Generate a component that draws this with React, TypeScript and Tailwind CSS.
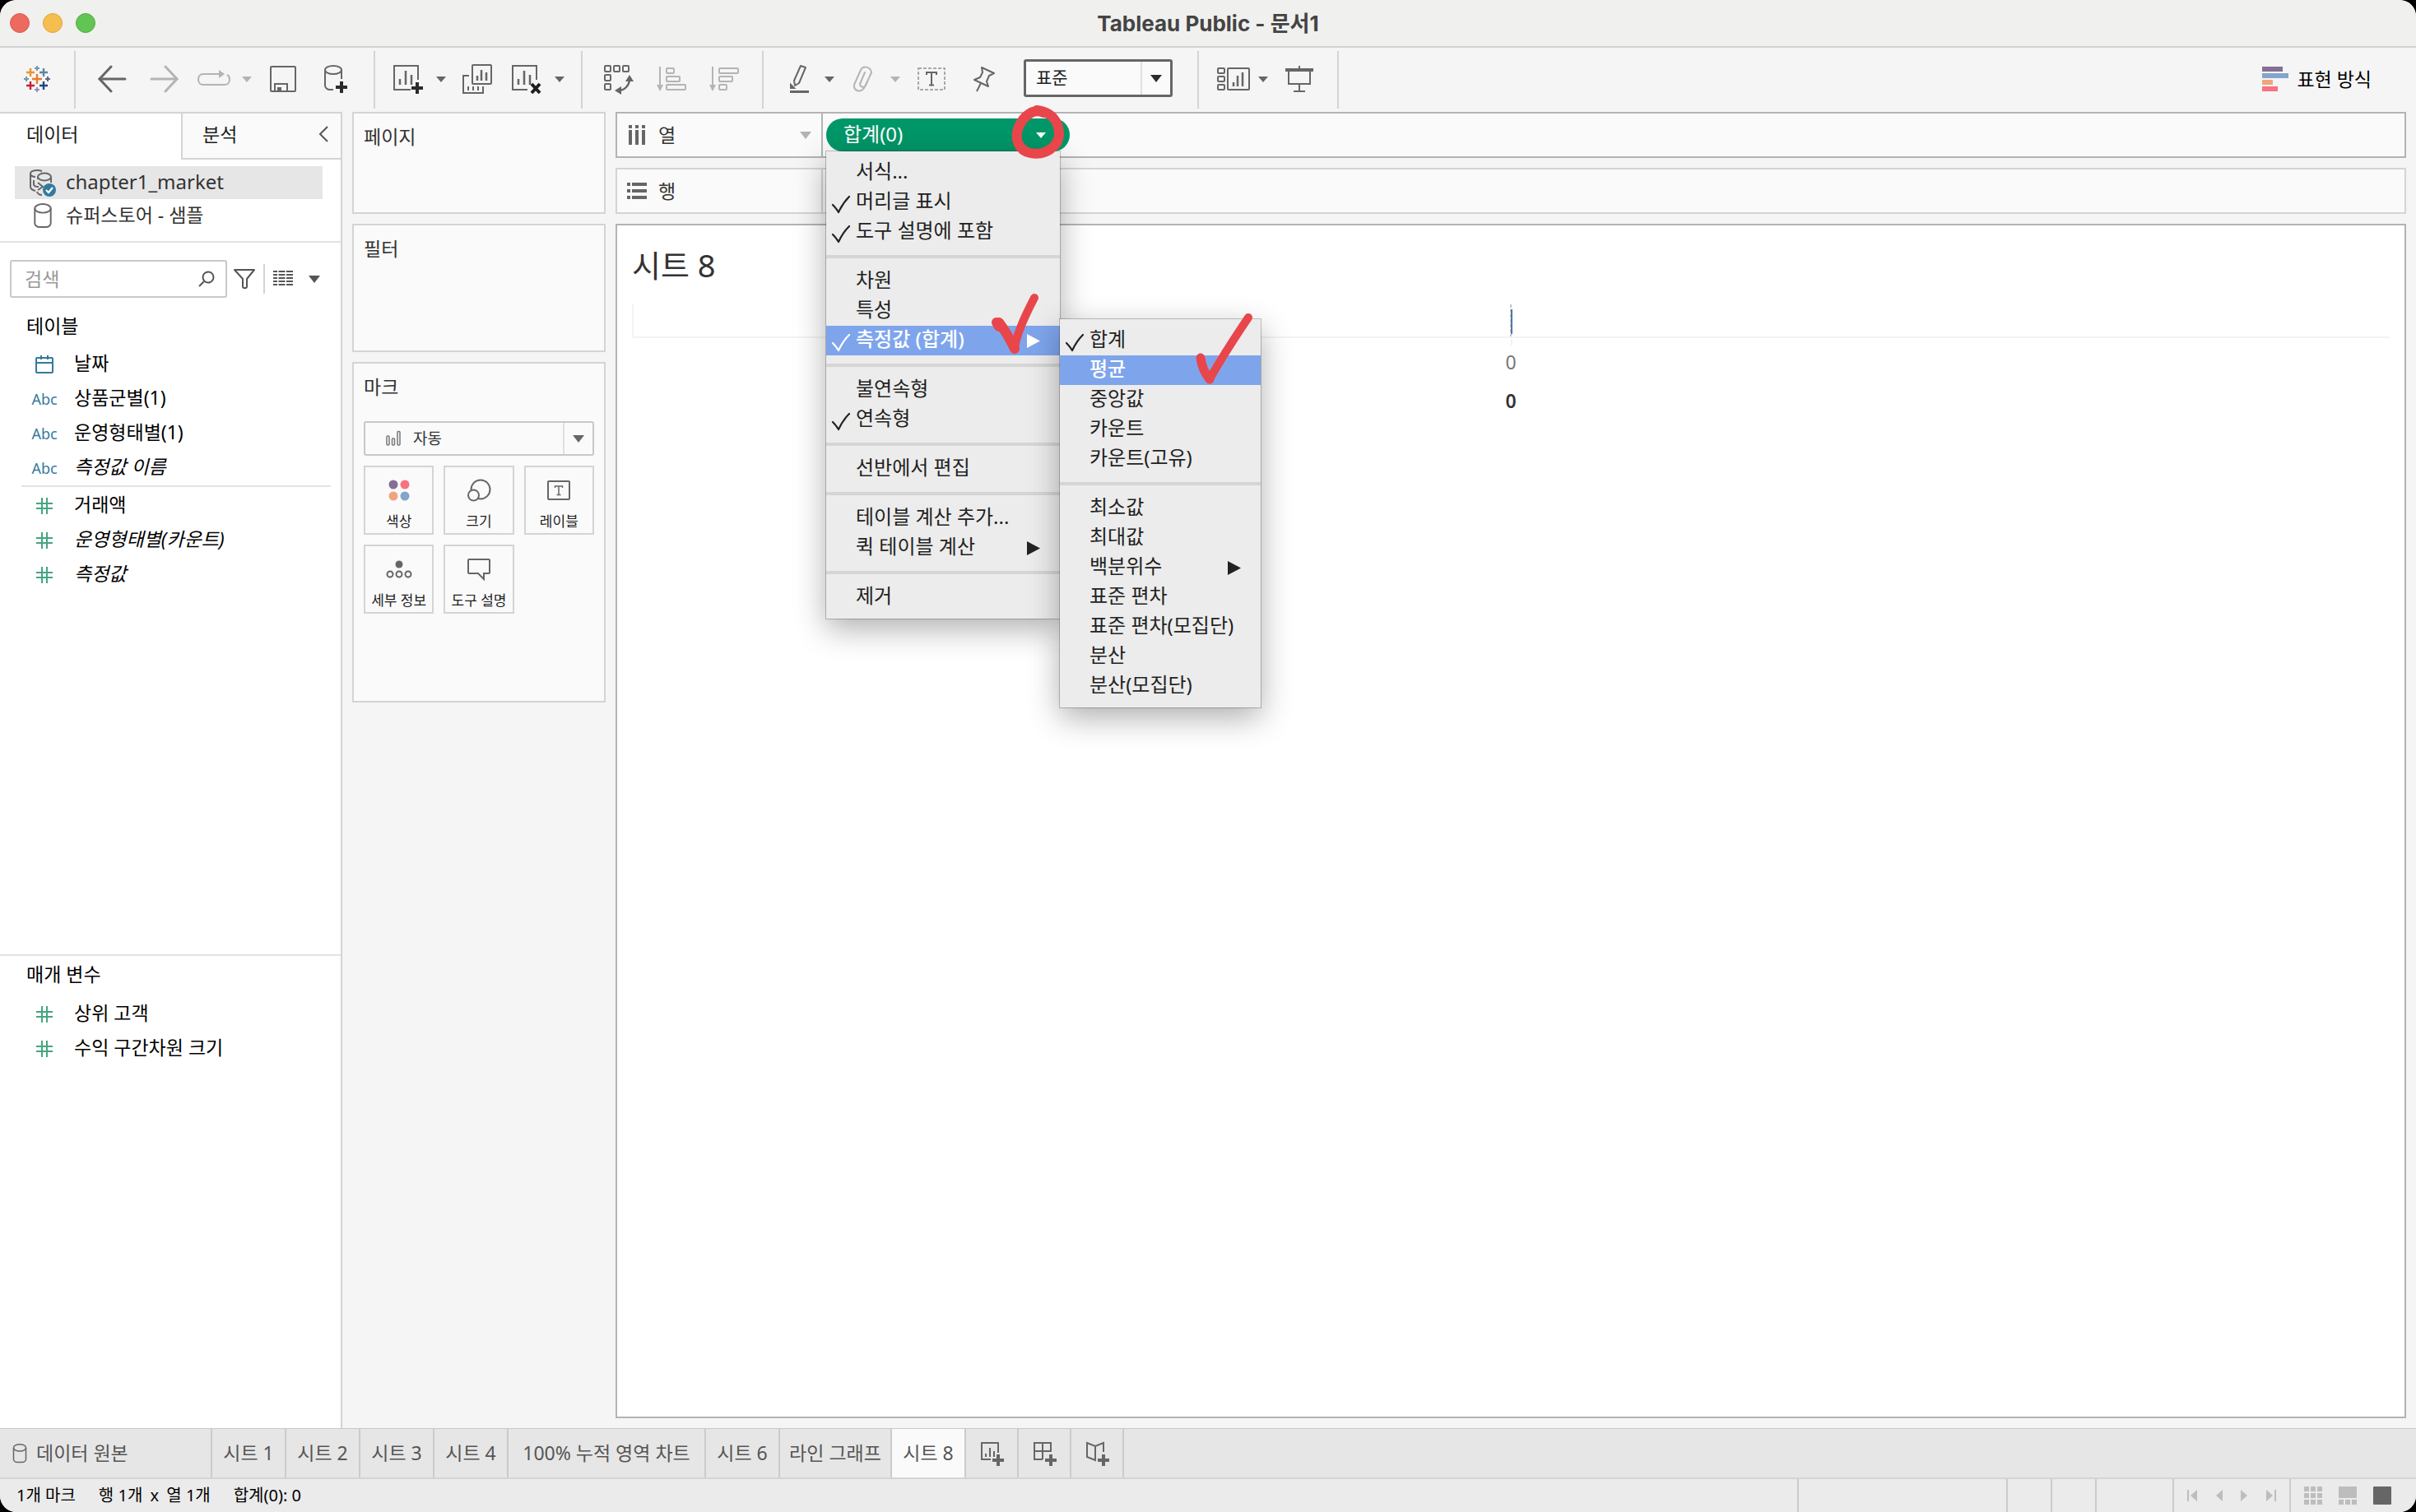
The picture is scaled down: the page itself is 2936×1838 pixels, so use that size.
import type { ReactNode } from "react";
import clsx from "clsx";

const RED = "#e8464b";

/* ---------- small shared pieces ---------- */

function Caret({ className, big }: { className?: string; big?: boolean }) {
  return (
    <svg width={big ? 14 : 12} height={big ? 9 : 7} viewBox="0 0 14 9" preserveAspectRatio="none" className={clsx("shrink-0", className)}>
      <path d="M0 0H14L7 9Z" fill="currentColor" />
    </svg>
  );
}

function Cylinder({ w, h }: { w: number; h: number }) {
  return (
    <svg width={w} height={h} viewBox="0 0 24 32" fill="none" stroke="#666" strokeWidth={2}>
      <ellipse cx="12" cy="6.5" rx="10" ry="5.5" />
      <path d="M2 6.5V25c0 3 3 5 6 5h8c3 0 6-2 6-5V6.5" />
    </svg>
  );
}

function HashIcon() {
  return (
    <svg width="22" height="22" viewBox="0 0 22 22" fill="none" stroke="#45a580" strokeWidth={2}>
      <path d="M8 1v20M14 1v20M1 8h20M1 14h20" />
    </svg>
  );
}

function CalendarIcon() {
  return (
    <svg width="24" height="24" viewBox="0 0 24 24" fill="none" stroke="#337a9e" strokeWidth={2}>
      <rect x="2" y="4" width="20" height="18" rx="1" />
      <path d="M2 10h20M8 1v5M16 1v5" />
    </svg>
  );
}

/* ---------- toolbar ---------- */

function Group({ children, className }: { children: ReactNode; className?: string }) {
  return <div className={clsx("flex items-center border-r-2 border-[#d4d4d4] pb-1", className)}>{children}</div>;
}

function Tool({ label, className, children }: { label: string; className?: string; children: ReactNode }) {
  return (
    <button type="button" aria-label={label} className={clsx("flex h-16 shrink-0 items-center justify-center pt-0.5 text-[#666]", className ?? "w-16")}>
      {children}
    </button>
  );
}

function TableauLogo() {
  return (
    <svg width="34" height="34" viewBox="0 0 34 34" fill="none">
      <path d="M17 11v12M11 17h12" stroke="#eb7a2d" strokeWidth={2.4} />
      <path d="M9 4v10M4 9h10" stroke="#e8942d" strokeWidth={2.4} />
      <path d="M25 4v10M20 9h10" stroke="#5b879b" strokeWidth={2.4} />
      <path d="M9 20v10M4 25h10" stroke="#c72037" strokeWidth={2.4} />
      <path d="M25 20v10M20 25h10" stroke="#1f457e" strokeWidth={2.4} />
      <path d="M17 1v6M14 4h6" stroke="#7199a6" strokeWidth={2} />
      <path d="M17 27v6M14 30h6" stroke="#8b93ba" strokeWidth={2} />
      <path d="M4 14v6M1 17h6" stroke="#7199a6" strokeWidth={2} />
      <path d="M30 14v6M27 17h6" stroke="#5c6692" strokeWidth={2} />
    </svg>
  );
}

function Toolbar() {
  return (
    <div className="flex h-[78px] shrink-0 bg-[#f5f5f5] py-1">
      <Group className="w-[92px] justify-center">
        <Tool label="Tableau">
          <TableauLogo />
        </Tool>
      </Group>

      <Group className="pr-3.5 pl-3">
        <Tool label="뒤로">
          <svg width="36" height="34" viewBox="0 0 36 34" fill="none" stroke="#666" strokeWidth={3} strokeLinecap="round">
            <path d="M3 17H34" />
            <path d="M17 2L3 17L17 32" />
          </svg>
        </Tool>
        <Tool label="앞으로">
          <svg width="36" height="34" viewBox="0 0 36 34" fill="none" stroke="#b4b4b4" strokeWidth={3} strokeLinecap="round">
            <path d="M2 17H33" />
            <path d="M19 2L33 17L19 32" />
          </svg>
        </Tool>
        <Tool label="재생" className="w-14">
          <svg width="42" height="26" viewBox="0 0 42 26" fill="none" stroke="#b4b4b4" strokeWidth={2}>
            <path d="M28 7H8C4 7 2 10 2 13.500S4 20 8 20H34C38 20 40 17 40 13.500C40 11 39 9 37 8" />
            <path d="M27 2L34 7L27 12Z" fill="#b4b4b4" stroke="none" />
          </svg>
        </Tool>
        <Tool label="재생 메뉴" className="w-6">
          <Caret className="text-[#b4b4b4]" />
        </Tool>
        <Tool label="저장">
          <svg width="34" height="34" viewBox="0 0 34 34" fill="none" stroke="#666" strokeWidth={2}>
            <rect x="2" y="2" width="30" height="30" rx="1" />
            <path d="M7 32V23H22V32" />
            <path d="M10 27h5v5h-5z" fill="#666" stroke="none" />
          </svg>
        </Tool>
        <Tool label="새 데이터 원본">
          <svg width="30" height="36" viewBox="0 0 30 36" fill="none" stroke="#666" strokeWidth={2}>
            <ellipse cx="12" cy="7" rx="10" ry="5" />
            <path d="M2 7V26C2 29 5 31 8 31H12M22 7V18" />
            <path d="M22 21V35M15 28H29" stroke="#2b2b2b" strokeWidth={4} />
          </svg>
        </Tool>
      </Group>

      <Group className="pr-2.5 pl-2">
        <Tool label="새 워크시트">
          <svg width="38" height="38" viewBox="0 0 38 38" fill="none" stroke="#666" strokeWidth={2}>
            <path d="M31 20V3H2V32H22" />
            <path d="M9 19v7M16 9v17M23 14v12" strokeWidth={2.500} />
            <path d="M30 23V37M23 30H37" stroke="#2b2b2b" strokeWidth={4} />
          </svg>
        </Tool>
        <Tool label="새 워크시트 메뉴" className="w-4">
          <Caret />
        </Tool>
        <Tool label="시트 복제" className="w-[72px]">
          <svg width="38" height="36" viewBox="0 0 38 36" fill="none" stroke="#666" strokeWidth={2}>
            <rect x="13" y="1" width="23" height="23" rx="1" />
            <path d="M19 14v6M24 7v13M30 10v10" strokeWidth={2.500} />
            <path d="M9 14H2V35H26V27" />
            <path d="M8 27v5M14 27v5M20 27v5" />
          </svg>
        </Tool>
        <Tool label="시트 지우기" className="w-12">
          <svg width="38" height="38" viewBox="0 0 38 38" fill="none" stroke="#666" strokeWidth={2}>
            <path d="M31 20V3H2V32H20" />
            <path d="M9 19v7M16 9v17M23 14v12" strokeWidth={2.500} />
            <path d="M25 25L35 36M35 25L25 36" stroke="#1e1e1e" strokeWidth={4} />
          </svg>
        </Tool>
        <Tool label="지우기 메뉴" className="w-8">
          <Caret />
        </Tool>
      </Group>

      <Group className="pr-3.5 pl-3">
        <Tool label="행과 열 바꾸기">
          <svg width="38" height="38" viewBox="0 0 38 38" fill="none" stroke="#666" strokeWidth={2}>
            <rect x="2" y="3" width="7" height="7" rx="1" />
            <rect x="13" y="3" width="7" height="7" rx="1" />
            <rect x="24" y="3" width="7" height="7" rx="1" />
            <rect x="2" y="14" width="7" height="7" rx="1" />
            <rect x="2" y="25" width="7" height="7" rx="1" />
            <path d="M32 19C32 26 27 32 20 33" strokeWidth={2.500} />
            <path d="M27 22L32 14L37 22ZM22 28L14 33L22 38Z" fill="#666" stroke="none" />
          </svg>
        </Tool>
        <Tool label="오름차순 정렬">
          <svg width="38" height="32" viewBox="0 0 38 32" fill="none" stroke="#b4b4b4" strokeWidth={2}>
            <path d="M5 1V26" />
            <path d="M1 23H9L5 31Z" fill="#b4b4b4" stroke="none" />
            <rect x="13" y="3" width="9" height="6" rx="1" />
            <rect x="13" y="13" width="16" height="6" rx="1" />
            <rect x="13" y="23" width="23" height="6" rx="1" />
          </svg>
        </Tool>
        <Tool label="내림차순 정렬">
          <svg width="38" height="32" viewBox="0 0 38 32" fill="none" stroke="#b4b4b4" strokeWidth={2}>
            <path d="M5 1V26" />
            <path d="M1 23H9L5 31Z" fill="#b4b4b4" stroke="none" />
            <rect x="13" y="3" width="23" height="6" rx="1" />
            <rect x="13" y="13" width="16" height="6" rx="1" />
            <rect x="13" y="23" width="9" height="6" rx="1" />
          </svg>
        </Tool>
      </Group>

      <Group className="pr-[30px] pl-4">
        <Tool label="하이라이트" className="w-14">
          <svg width="26" height="36" viewBox="0 0 26 36" fill="none" stroke="#666" strokeWidth={2}>
            <path d="M14 2L20 4L12 23L7 26L6 20Z" strokeLinejoin="round" />
            <path d="M2 25L6 29L2 29Z" fill="#666" />
            <path d="M1 33.500H24" strokeWidth={3} />
          </svg>
        </Tool>
        <Tool label="하이라이트 메뉴" className="w-4">
          <Caret />
        </Tool>
        <Tool label="그룹">
          <svg width="26" height="34" viewBox="0 0 26 34" fill="none" stroke="#b4b4b4" strokeWidth={2} strokeLinecap="round">
            <path d="M20 18L15 28C11 34 2 32 3 24L11 6C14 0 23 2 24 9L17 25C15 28 10 27 10 23L16 9" />
          </svg>
        </Tool>
        <Tool label="그룹 메뉴" className="w-4">
          <Caret className="text-[#b4b4b4]" />
        </Tool>
        <Tool label="마크 레이블" className="w-[72px]">
          <svg width="36" height="30" viewBox="0 0 36 30" fill="none" stroke="#aaa" strokeWidth={2}>
            <rect x="2" y="2" width="32" height="26" strokeDasharray="4 2" />
            <path d="M12 10V7H24V10M18 7V22M15 22.500H21" stroke="#666" />
          </svg>
        </Tool>
        <Tool label="축 고정" className="w-14">
          <svg width="30" height="32" viewBox="0 0 30 32" fill="none" stroke="#666" strokeWidth={2} strokeLinejoin="round">
            <path d="M12 2L27 9L21 12L18 19L20 25L3 17L10 14L13 8Z" />
            <path d="M11 21L6 31" />
          </svg>
        </Tool>
        <div className="ml-5 flex h-[46px] w-[181px] items-center rounded-[3px] border-[3px] border-[#666] bg-[#fafafa]">
          <select aria-label="맞춤" className="h-full min-w-0 flex-1 appearance-none pl-3 text-[21px] text-[#1e1e1e] outline-none" defaultValue="표준">
            <option>표준</option>
          </select>
          <span className="flex h-full w-9 items-center justify-center border-l-2 border-[#e0e0e0] text-[#2b2b2b]">
            <Caret big />
          </span>
        </div>
      </Group>

      <Group className="pr-2.5 pl-3.5">
        <Tool label="카드 표시/숨기기" className="w-14">
          <svg width="42" height="32" viewBox="0 0 42 32" fill="none" stroke="#666" strokeWidth={2}>
            <rect x="2" y="3" width="8" height="6" rx="1" />
            <rect x="2" y="13" width="8" height="6" rx="1" />
            <rect x="2" y="23" width="8" height="6" rx="1" />
            <rect x="14" y="3" width="26" height="26" rx="1" />
            <path d="M21 20v5M26 12v13M32 8v17" strokeWidth={2.500} />
          </svg>
        </Tool>
        <Tool label="카드 메뉴" className="w-4">
          <Caret />
        </Tool>
        <Tool label="프레젠테이션 모드" className="w-[72px]">
          <svg width="36" height="34" viewBox="0 0 36 34" fill="none" stroke="#666" strokeWidth={2}>
            <path d="M1 6H35" strokeWidth={4} />
            <path d="M18 1V5M5 8V23H31V8M18 23V32M11 32H25" />
          </svg>
        </Tool>
      </Group>

      <button type="button" className="ml-auto flex items-center gap-2.5 pr-[54px] pb-0.5 text-[23px] text-black">
        <svg width="32" height="30" viewBox="0 0 32 30">
          <path d="M0 0H25V6H0Z" fill="#866e95" />
          <path d="M0 8H32V14H0Z" fill="#82a5cb" />
          <path d="M0 16H13V22H0Z" fill="#f2a57d" />
          <path d="M0 24H19V30H0Z" fill="#fa7180" />
        </svg>
        표현 방식
      </button>
    </div>
  );
}

/* ---------- data pane ---------- */

interface Field {
  name: string;
  icon: "date" | "abc" | "num";
  italic?: boolean;
}

const dimensions: Field[] = [
  { name: "날짜", icon: "date" },
  { name: "상품군별(1)", icon: "abc" },
  { name: "운영형태별(1)", icon: "abc" },
  { name: "측정값 이름", icon: "abc", italic: true },
];

const measures: Field[] = [
  { name: "거래액", icon: "num" },
  { name: "운영형태별(카운트)", icon: "num", italic: true },
  { name: "측정값", icon: "num", italic: true },
];

const parameters: Field[] = [
  { name: "상위 고객", icon: "num" },
  { name: "수익 구간차원 크기", icon: "num" },
];

function FieldList({ fields }: { fields: Field[] }) {
  return (
    <ul>
      {fields.map((f) => (
        <li key={f.name} className="flex h-[42px] items-center pl-8">
          <span className="flex w-11 justify-center pt-1">
            {f.icon === "date" && <CalendarIcon />}
            {f.icon === "abc" && <span className="text-[18px] text-[#337a9e]">Abc</span>}
            {f.icon === "num" && <HashIcon />}
          </span>
          <span className={clsx("pl-3.5 text-[23px] text-black", f.italic && "italic")}>{f.name}</span>
        </li>
      ))}
    </ul>
  );
}

function DataPane() {
  return (
    <aside className="flex w-[416px] shrink-0 flex-col border-t-2 border-r-2 border-[#d4d4d4] bg-white">
      <div className="flex h-14 shrink-0 text-[23px] text-[#1e1e1e]">
        <button type="button" className="w-[220px] pb-1.5 pl-8 text-left">
          데이터
        </button>
        <div className="flex flex-1 items-center justify-between border-b-2 border-l-2 border-[#d4d4d4] bg-[#fafafa] pr-3.5 pb-1 pl-6">
          <button type="button">분석</button>
          <button type="button" aria-label="접기">
            <svg width="14" height="20" viewBox="0 0 14 20" fill="none" stroke="#555" strokeWidth={2}>
              <path d="M12 1L3 10L12 19" />
            </svg>
          </button>
        </div>
      </div>

      <ul className="mt-2 border-b-2 border-[#e3e3e3] pb-[11px] text-[#333]">
        <li className="mr-[22px] ml-[18px] flex h-10 items-center bg-[#e6e6e6] pl-4">
          <svg width="34" height="34" viewBox="0 0 34 34" fill="none" stroke="#666" strokeWidth={2}>
            <path d="M17 3C12 1 3 2 3 6V22C3 25 5 26 9 27" />
            <path d="M3 7C4 9 6 10 9 10" />
            <ellipse cx="20" cy="10" rx="8" ry="4.500" />
            <path d="M12 10V13M28 10V17M7 14V19C7 21 9 22 13 22" />
            <path d="M12 17L18 22L12 26M11 28C12 31 14 32 17 32" />
            <circle cx="26" cy="26" r="8" fill="#337a9e" stroke="none" />
            <path d="M22 26L25 29L30 23" stroke="#fff" strokeWidth={2.200} />
          </svg>
          <span className="pb-0.5 pl-3 text-[24px]">chapter1_market</span>
        </li>
        <li className="ml-[18px] flex h-10 items-center pl-[22px]">
          <Cylinder w={24} h={31} />
          <span className="pb-0.5 pl-4 text-[23px]">슈퍼스토어 - 샘플</span>
        </li>
      </ul>

      <div className="mt-[21px] flex items-center pl-3">
        <label className="flex h-[46px] w-[264px] items-center rounded-[3px] border-2 border-[#c8c8c8] bg-white pr-3">
          <input type="text" aria-label="검색" placeholder="검색" className="min-w-0 flex-1 pl-4 text-[23px] outline-none placeholder:text-[#999]" />
          <svg width="22" height="22" viewBox="0 0 22 22" fill="none" stroke="#555" strokeWidth={2}>
            <circle cx="13" cy="9" r="6.500" />
            <path d="M8 14L2 20" />
          </svg>
        </label>
        <button type="button" aria-label="필터" className="pl-2">
          <svg width="26" height="26" viewBox="0 0 26 26" fill="none" stroke="#555" strokeWidth={2} strokeLinejoin="round">
            <path d="M1 2H25L16 13V22C16 25 11 25 11 22V13Z" />
          </svg>
        </button>
        <span className="ml-2.5 h-9 w-0.5 bg-[#d4d4d4]" />
        <button type="button" aria-label="보기" className="pl-2.5">
          <svg width="24" height="20" viewBox="0 0 24 20" stroke="#555" strokeWidth={2}>
            <path d="M0 1H24M0 5H24M0 9H24M0 13H24M0 17H24" strokeDasharray="5 1.500 8 1.500 8" />
          </svg>
        </button>
        <button type="button" aria-label="보기 메뉴" className="pl-[19px] text-[#555]">
          <Caret big />
        </button>
      </div>

      <h2 className="mt-2.5 flex h-12 items-center pl-8 text-[23px] text-black">테이블</h2>
      <FieldList fields={dimensions} />
      <hr className="mt-0.5 mr-3 ml-[26px] border-t-2 border-[#e3e3e3]" />
      <FieldList fields={measures} />

      <section className="mt-auto h-[576px] border-t-2 border-[#e3e3e3]">
        <h2 className="mb-1 flex h-11 items-center pl-8 text-[23px] text-black">매개 변수</h2>
        <FieldList fields={parameters} />
      </section>
    </aside>
  );
}

/* ---------- cards ---------- */

function Card({ title, className, children }: { title: string; className: string; children?: ReactNode }) {
  return (
    <section className={clsx("border-2 border-[#d4d4d4] bg-[#fafafa] px-3 pt-2.5", className)}>
      <h2 className="text-[23px] leading-9 text-[#333]">{title}</h2>
      {children}
    </section>
  );
}

function MarkButton({ label, children }: { label: string; children: ReactNode }) {
  return (
    <button type="button" className="flex h-[84px] flex-col items-center border-2 border-[#d4d4d4] pt-3 text-[17px] leading-6 whitespace-nowrap text-[#1e1e1e]">
      <span className="flex h-8 items-center">{children}</span>
      <span className="mt-2.5">{label}</span>
    </button>
  );
}

function MarksCard() {
  return (
    <Card title="마크" className="h-[414px]">
      <div className="mt-6 flex h-[42px] items-center rounded-[3px] border-2 border-[#c8c8c8]">
        <svg width="20" height="20" viewBox="0 0 20 20" fill="none" stroke="#777" strokeWidth={1.500} className="ml-6">
          <rect x="2" y="7" width="3" height="11" rx="1" />
          <rect x="8.500" y="10" width="3" height="8" rx="1" />
          <rect x="15" y="1.500" width="3" height="16.500" rx="1" />
        </svg>
        <select aria-label="마크 유형" className="h-full min-w-0 flex-1 appearance-none pl-3.5 text-[19px] text-[#333] outline-none" defaultValue="자동">
          <option>자동</option>
        </select>
        <span className="flex h-full w-9 items-center justify-center border-l-2 border-[#e0e0e0] text-[#666]">
          <Caret big />
        </span>
      </div>
      <div className="mt-3 grid grid-cols-3 gap-3">
        <MarkButton label="색상">
          <svg width="26" height="26" viewBox="0 0 26 26">
            <circle cx="6" cy="6" r="5.500" fill="#866e95" />
            <circle cx="20" cy="6" r="5.500" fill="#fa7180" />
            <circle cx="6" cy="20" r="5.500" fill="#f2a57d" />
            <circle cx="20" cy="20" r="5.500" fill="#82a5cb" />
          </svg>
        </MarkButton>
        <MarkButton label="크기">
          <svg width="30" height="28" viewBox="0 0 30 28" fill="none" stroke="#666" strokeWidth={2}>
            <circle cx="17" cy="13" r="11.500" />
            <circle cx="8.500" cy="20" r="6.500" fill="#fafafa" />
          </svg>
        </MarkButton>
        <MarkButton label="레이블">
          <svg width="28" height="24" viewBox="0 0 28 24" fill="none" stroke="#666" strokeWidth={2}>
            <rect x="1" y="1" width="26" height="22" rx="1" />
            <path d="M9.500 9V7H18.500V9M14 7V17M11.500 17.500H16.500" strokeWidth={1.500} />
          </svg>
        </MarkButton>
        <MarkButton label="세부 정보">
          <svg width="32" height="24" viewBox="0 0 32 24" fill="none" stroke="#666" strokeWidth={2}>
            <circle cx="16" cy="6" r="4.500" fill="#666" stroke="none" />
            <circle cx="5" cy="18" r="3.500" />
            <circle cx="16" cy="18" r="3.500" />
            <circle cx="27" cy="18" r="3.500" />
          </svg>
        </MarkButton>
        <MarkButton label="도구 설명">
          <svg width="28" height="28" viewBox="0 0 28 28" fill="none" stroke="#666" strokeWidth={2}>
            <path d="M2 2H26Q27 2 27 3V18Q27 19 26 19H20V26L13 19H2Q1 19 1 18V3Q1 2 2 2Z" />
          </svg>
        </MarkButton>
      </div>
    </Card>
  );
}

/* ---------- menus ---------- */

interface Item {
  label?: string;
  checked?: boolean;
  active?: boolean;
  arrow?: boolean;
  submenu?: Item[];
}

const aggregations: Item[] = [
  { label: "합계", checked: true },
  { label: "평균", active: true },
  { label: "중앙값" },
  { label: "카운트" },
  { label: "카운트(고유)" },
  {},
  { label: "최소값" },
  { label: "최대값" },
  { label: "백분위수", arrow: true },
  { label: "표준 편차" },
  { label: "표준 편차(모집단)" },
  { label: "분산" },
  { label: "분산(모집단)" },
];

const pillMenu: Item[] = [
  { label: "서식..." },
  { label: "머리글 표시", checked: true },
  { label: "도구 설명에 포함", checked: true },
  {},
  { label: "차원" },
  { label: "특성" },
  { label: "측정값 (합계)", checked: true, active: true, arrow: true, submenu: aggregations },
  {},
  { label: "불연속형" },
  { label: "연속형", checked: true },
  {},
  { label: "선반에서 편집" },
  {},
  { label: "테이블 계산 추가..." },
  { label: "퀵 테이블 계산", arrow: true },
  {},
  { label: "제거" },
];

function Menu({ items, className }: { items: Item[]; className: string }) {
  return (
    <ul className={clsx("absolute bg-[#ececec] py-2 text-[24px] text-[#222] shadow-[0_0_0_1px_rgba(0,0,0,0.22),0_12px_36px_rgba(0,0,0,0.32)]", className)}>
      {items.map((it, i) =>
        it.label ? (
          <li key={i} className={clsx("relative h-9", it.active && "bg-[#7ea5ec] text-white")}>
            <button type="button" className="flex h-9 w-full items-center pr-6 pb-1 whitespace-nowrap">
              <span className="flex w-9 shrink-0 pt-2 pl-1.5">
                {it.checked && (
                  <svg width="24" height="23" viewBox="0 0 24 23" fill="none" stroke="currentColor" strokeWidth={2.200} strokeLinecap="round" strokeLinejoin="round">
                    <path d="M2 12Q6 16 9 21Q14 10 22 2" />
                  </svg>
                )}
              </span>
              <span className={clsx("leading-8", it.active && "font-medium")}>{it.label}</span>
              {it.arrow && (
                <svg width="16" height="17" viewBox="0 0 16 17" className="mt-1 ml-auto shrink-0">
                  <path d="M0 0L16 8.500L0 17Z" fill="currentColor" />
                </svg>
              )}
            </button>
            {it.submenu && <Menu items={it.submenu} className="-top-2 left-full w-[244px]" />}
            {it.submenu && (
              <svg width="62" height="76" viewBox="0 0 62 76" fill="none" stroke={RED} strokeLinecap="round" strokeLinejoin="round" className="absolute -top-10 left-[200px]">
                <path d="M7 36L10 41M10 36Q20 49 29 68" strokeWidth={12} />
                <path d="M29 68Q31 48 53 6" strokeWidth={10} />
              </svg>
            )}
            {it.label === "평균" && (
              <svg width="76" height="92" viewBox="0 0 76 92" fill="none" stroke={RED} strokeLinecap="round" strokeLinejoin="round" className="absolute -top-[54px] left-[160px]">
                <path d="M11 57Q13 72 22 83" strokeWidth={11} />
                <path d="M22 83Q38 54 69 8" strokeWidth={10} />
              </svg>
            )}
          </li>
        ) : (
          <li key={i} className="py-2.5">
            <hr className="border-t-4 border-[#d5d5d5]" />
          </li>
        )
      )}
    </ul>
  );
}

function Pill() {
  return (
    <div className="relative z-10 ml-1 w-[296px]">
      <button type="button" className="flex h-10 w-full items-center justify-between rounded-full bg-[#009768] pr-[29px] pl-[21px] text-[24px] text-white">
        <span className="pb-0.5">합계(0)</span>
        <Caret />
      </button>
      <Menu items={pillMenu} className="top-full left-0 w-[284px]" />
      <svg width="70" height="70" viewBox="0 0 70 70" fill="none" stroke={RED} strokeWidth={12} strokeLinecap="round" className="absolute -top-[18px] left-[222px]">
        <path d="M42 11C30 5 18 15 12 28C6 43 12 57 26 60C44 64 60 52 61 38C61 22 52 10 34 8" />
      </svg>
    </div>
  );
}

/* ---------- shelves and view ---------- */

function Shelf({ label, icon, active, children }: { label: string; icon: ReactNode; active?: boolean; children?: ReactNode }) {
  return (
    <div className={clsx("flex h-14 shrink-0 border-2 bg-[#fafafa]", active ? "border-[#b3b3b3]" : "border-[#d4d4d4]")}>
      <div className={clsx("flex w-[250px] items-center border-r-2 pr-3 pl-3", active ? "border-[#b3b3b3]" : "border-[#d4d4d4]")}>
        {icon}
        <span className="pl-3.5 text-[23px] text-[#333]">{label}</span>
        {active && <Caret big className="ml-auto text-[#b3b3b3]" />}
      </div>
      <div className="flex flex-1 items-center">{children}</div>
    </div>
  );
}

function View() {
  return (
    <section className="flex-1 border-2 border-[#b3b3b3] bg-white px-[18px]">
      <h1 className="flex h-24 items-center text-[38px] text-[#333]">시트 8</h1>
      <div className="flex h-[41px] justify-center border-b-2 border-l-2 border-[#f3f3f3]">
        <svg width="6" height="50" viewBox="0 0 6 50" className="shrink-0 overflow-visible">
          <path d="M2 0V39" stroke="#c4c4c4" strokeWidth={2} strokeDasharray="4 2" />
          <path d="M3 6V36" stroke="#4e79a7" strokeWidth={2} />
          <path d="M3 42V50" stroke="#f3f3f3" strokeWidth={2} />
        </svg>
      </div>
      <div className="flex flex-col items-center pt-1.5 text-[23px] leading-[47px]">
        <span className="text-[#777]">0</span>
        <span className="font-semibold text-[#333]">0</span>
      </div>
    </section>
  );
}

function Worksheet() {
  return (
    <main className="flex min-w-0 flex-1 flex-col gap-3">
      <Shelf
        label="열"
        active
        icon={
          <svg width="24" height="24" viewBox="0 0 24 24" stroke="#666" strokeWidth={4}>
            <path d="M4 0v4M12 0v4M20 0v4M4 6v18M12 6v18M20 6v18" />
          </svg>
        }
      >
        <Pill />
      </Shelf>
      <Shelf
        label="행"
        icon={
          <svg width="24" height="20" viewBox="0 0 24 20" stroke="#666" strokeWidth={4}>
            <path d="M0 2h4M0 10h4M0 18h4M6 2h18M6 10h18M6 18h18" />
          </svg>
        }
      />
      <View />
    </main>
  );
}

/* ---------- bottom bars ---------- */

const sheets = [
  { name: "시트 1", width: "w-[90px]" },
  { name: "시트 2", width: "w-[90px]" },
  { name: "시트 3", width: "w-[90px]" },
  { name: "시트 4", width: "w-[90px]" },
  { name: "100% 누적 영역 차트", width: "w-60" },
  { name: "시트 6", width: "w-[90px]" },
  { name: "라인 그래프", width: "w-[136px]" },
  { name: "시트 8", width: "w-[90px]" },
];

function NewTab({ label, children }: { label: string; children: ReactNode }) {
  return (
    <button type="button" aria-label={label} className="flex w-16 items-center justify-center border-r-2 border-[#cbcbcb]">
      <svg width="32" height="32" viewBox="0 0 32 32" fill="none" stroke="#666" strokeWidth={2}>
        {children}
        <path d="M24 17V31M17 24H31" strokeWidth={4} />
      </svg>
    </button>
  );
}

function SheetTabs() {
  return (
    <nav className="flex h-[62px] shrink-0 border-t border-b-2 border-t-[#c8c8c8] border-b-[#d4d4d4] bg-[#e6e6e6] text-[23px] text-[#555]">
      <button type="button" className="flex w-[258px] items-center border-r-2 border-[#cbcbcb] pl-3.5">
        <Cylinder w={20} h={24} />
        <span className="pl-2.5">데이터 원본</span>
      </button>
      {sheets.map((s) => (
        <button key={s.name} type="button" className={clsx("shrink-0 border-r-2 border-[#cbcbcb] whitespace-nowrap", s.width, s.name === "시트 8" && "bg-[#fafafa]")}>
          {s.name}
        </button>
      ))}
      <NewTab label="새 워크시트">
        <path d="M24 15V3H4V23H15" />
        <path d="M9 16v4M14 9v11M19 13v7" />
      </NewTab>
      <NewTab label="새 대시보드">
        <path d="M24 14V3H4V23H14M14 3V23M4 13H24" />
      </NewTab>
      <NewTab label="새 스토리">
        <path d="M24 14V3L14 7L4 3V20L14 24V7" />
      </NewTab>
    </nav>
  );
}

function StatusBar() {
  return (
    <footer className="flex h-10 shrink-0 bg-[#ebebeb] text-[20px] text-black">
      <div className="flex flex-1 items-center gap-7 pl-5">
        <span>1개 마크</span>
        <span>
          행 1개 <span className="mx-1">x</span> 열 1개
        </span>
        <span>합계(0): 0</span>
      </div>
      <div className="flex divide-x-2 divide-[#cbcbcb]">
        <span className="w-0" />
        <span className="w-[254px]" />
        <span className="w-[54px]" />
        <span className="w-[54px]" />
        <span className="w-[94px]" />
        <div className="flex w-[142px] items-center justify-between px-4 text-[#bdbdbd]">
          <button type="button" aria-label="처음">
            <svg width="12" height="14" viewBox="0 0 12 14" fill="currentColor">
              <path d="M0 0H2V14H0ZM12 0V14L4 7Z" />
            </svg>
          </button>
          <button type="button" aria-label="이전">
            <svg width="8" height="14" viewBox="0 0 8 14" fill="currentColor">
              <path d="M8 0V14L0 7Z" />
            </svg>
          </button>
          <button type="button" aria-label="다음">
            <svg width="8" height="14" viewBox="0 0 8 14" fill="currentColor">
              <path d="M0 0V14L8 7Z" />
            </svg>
          </button>
          <button type="button" aria-label="마지막">
            <svg width="12" height="14" viewBox="0 0 12 14" fill="currentColor">
              <path d="M10 0H12V14H10ZM0 0V14L8 7Z" />
            </svg>
          </button>
        </div>
        <div className="flex items-center gap-5 pr-[30px] pl-4">
          <button type="button" aria-label="시트 정렬기">
            <svg width="22" height="22" viewBox="0 0 22 22" fill="#bdbdbd">
              <path d="M0 0h6v6H0zM8 0h6v6H8zM16 0h6v6h-6zM0 8h6v6H0zM8 8h6v6H8zM16 8h6v6h-6zM0 16h6v6H0zM8 16h6v6H8zM16 16h6v6h-6z" />
            </svg>
          </button>
          <button type="button" aria-label="필름 스트립">
            <svg width="22" height="22" viewBox="0 0 22 22" fill="#bdbdbd">
              <path d="M0 0h22v14H0zM0 16h6v6H0zM8 16h6v6H8zM16 16h6v6h-6z" />
            </svg>
          </button>
          <button type="button" aria-label="시트 탭">
            <svg width="22" height="22" viewBox="0 0 22 22" fill="#666">
              <rect width="22" height="22" rx="1" />
            </svg>
          </button>
        </div>
      </div>
    </footer>
  );
}

export default function App() {
  return (
    <div className="bg-black font-['Noto_Sans','Noto_Sans_CJK_KR',sans-serif]">
      <div className="flex min-h-screen flex-col overflow-hidden rounded-[20px] bg-[#f5f5f5]">
        <header className="relative flex h-[58px] shrink-0 items-center justify-center border-b-2 border-[#d2d2d2] bg-[#f0f0ee]">
          <div className="absolute left-3 flex gap-4">
            <button type="button" aria-label="닫기" className="size-6 rounded-full border border-[#d85a4e] bg-[#ed6a5e]" />
            <button type="button" aria-label="최소화" className="size-6 rounded-full border border-[#dea43c] bg-[#f5bf4f]" />
            <button type="button" aria-label="확대" className="size-6 rounded-full border border-[#52a944] bg-[#61c554]" />
          </div>
          <h1 className="font-['Inter','Noto_Sans_CJK_KR',sans-serif] text-[26px] font-bold text-[#444]">Tableau Public - 문서1</h1>
        </header>
        <Toolbar />
        <div className="flex flex-1 gap-3 pr-3">
          <DataPane />
          <div className="flex w-[308px] shrink-0 flex-col gap-3 pb-3">
            <Card title="페이지" className="h-[124px]" />
            <Card title="필터" className="h-[156px]" />
            <MarksCard />
          </div>
          <div className="flex min-w-0 flex-1 pb-3">
            <Worksheet />
          </div>
        </div>
        <SheetTabs />
        <StatusBar />
      </div>
    </div>
  );
}
